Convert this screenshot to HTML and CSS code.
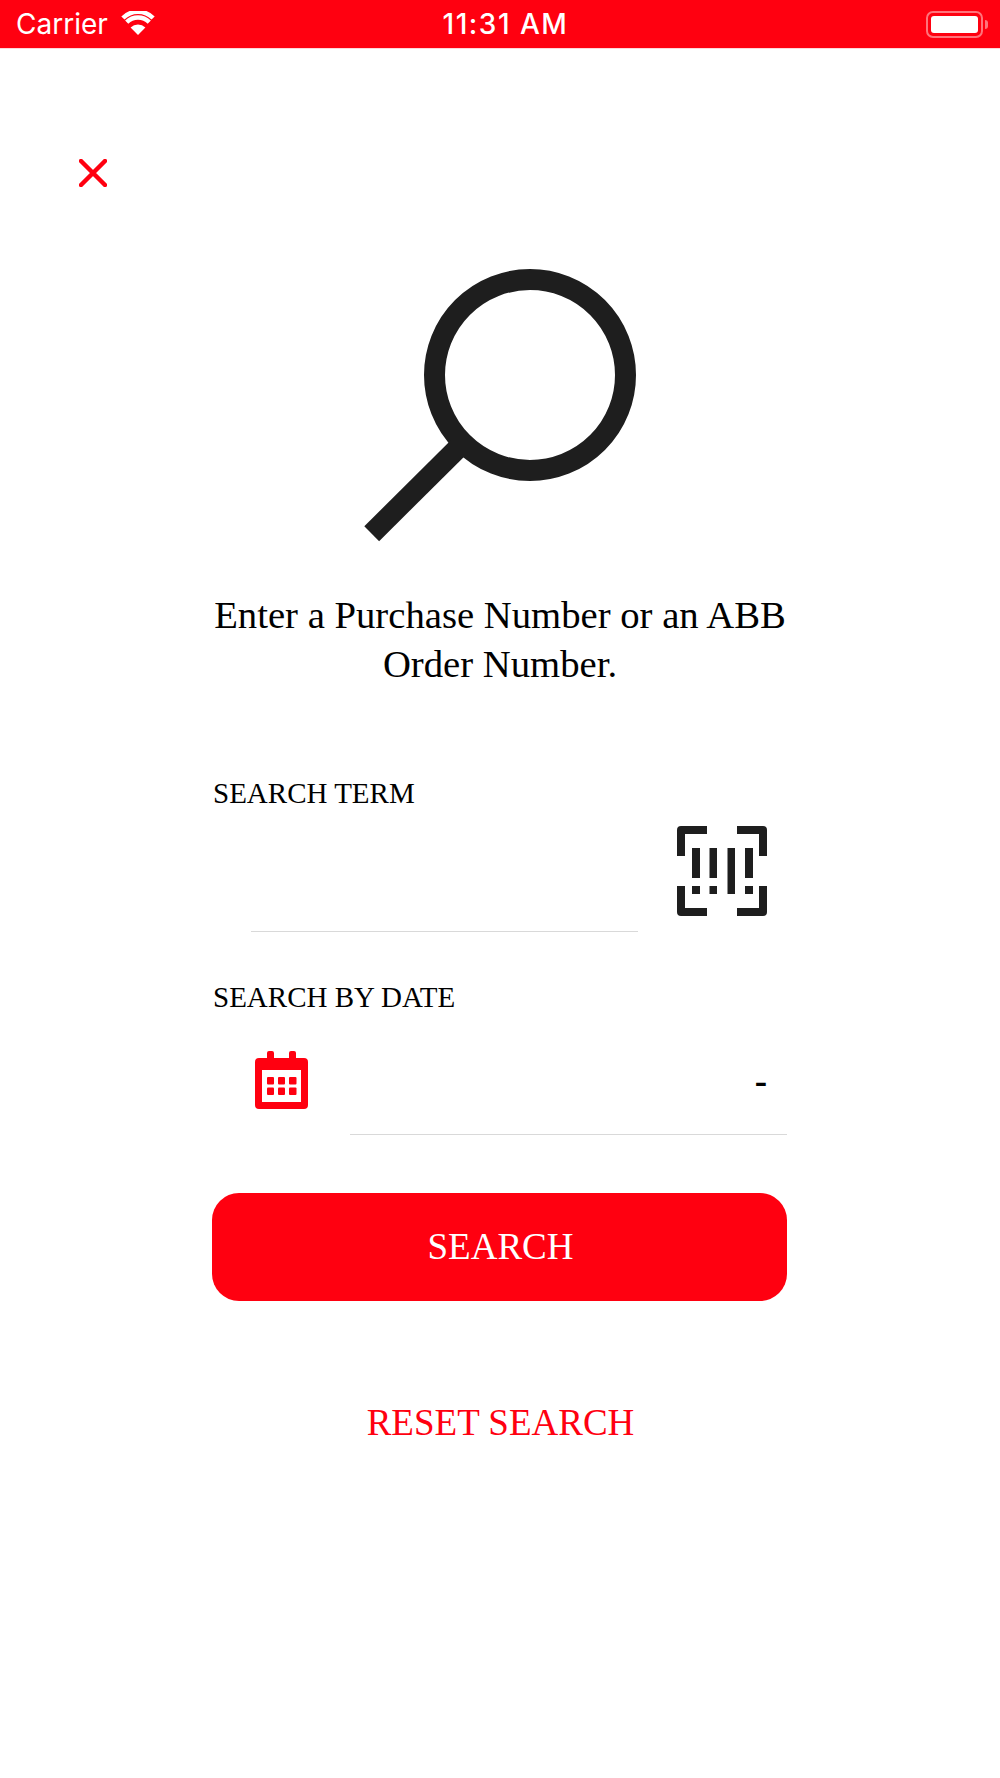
FILE: index.html
```html
<!DOCTYPE html>
<html>
<head>
    <title>Order search</title>
    <meta charset="utf-8">
    <link rel="stylesheet" href="styles.css">
</head>
<body>

<div class="statusbar">
    <div class="carrier">
        <span>Carrier</span>
        <svg class="wifi" width="34" height="24" viewBox="0 0 34 24">
            <path d="M17 24 L9.6 16.6 A10.5 10.5 0 0 1 24.4 16.6 Z" fill="#fff"/>
            <path d="M5.7 11.2 A16 16 0 0 1 28.3 11.2" fill="none" stroke="#fff" stroke-width="4.500"/>
            <path d="M1.9 7 A21.4 21.4 0 0 1 32.1 7" fill="none" stroke="#fff" stroke-width="4.500"/>
        </svg>
    </div>
    <div class="clock">11:31 AM</div>
    <div class="battery">
        <div class="battery-shell"><div class="battery-level"></div></div>
        <div class="battery-nub"></div>
    </div>
</div>

<svg class="close" width="28" height="28" viewBox="0 0 28 28">
    <path d="M2 2 L26 26 M26 2 L2 26" stroke="#ff0010" stroke-width="4.500" stroke-linecap="round"/>
</svg>

<svg class="hero" width="280" height="280" viewBox="0 0 280 280">
    <circle cx="168" cy="111" r="95.5" fill="none" stroke="#1e1e1e" stroke-width="21"/>
    <path d="M96 184 L9.7 269.7" stroke="#1e1e1e" stroke-width="21"/>
</svg>

<p class="intro">Enter a Purchase Number or an ABB<br>Order Number.</p>

<div class="form">
    <div class="label">SEARCH TERM</div>
    <div class="row term-row">
        <input class="field term-field" type="text">
        <svg class="barcode" width="90" height="90" viewBox="0 0 90 90" fill="#1e1e1e">
            <path d="M0 30 V4 Q0 0 4 0 H30 V8 H8 V30 Z"/>
            <path d="M60 0 H86 Q90 0 90 4 V30 H82 V8 H60 Z"/>
            <path d="M0 60 H8 V82 H30 V90 H4 Q0 90 0 86 Z"/>
            <path d="M82 60 H90 V86 Q90 90 86 90 H60 V82 H82 Z"/>
            <rect x="15" y="22" width="8" height="30"/>
            <rect x="15" y="60" width="8" height="8"/>
            <rect x="32.500" y="22" width="7.500" height="30"/>
            <rect x="32.500" y="60" width="7.500" height="8"/>
            <rect x="50.500" y="22" width="7.500" height="46"/>
            <rect x="68" y="22" width="8" height="30"/>
            <rect x="68" y="60" width="8" height="8"/>
        </svg>
    </div>

    <div class="label date-label">SEARCH BY DATE</div>
    <div class="row date-row">
        <svg class="calendar" width="53" height="58" viewBox="0 0 53 58" fill="#ff0010">
            <path fill-rule="evenodd" d="M12 2 Q12 0 14 0 H17 Q19 0 19 2 V7 H34 V2 Q34 0 36 0 H39 Q41 0 41 2 V7 H49 Q53 7 53 11 V54 Q53 58 49 58 H4 Q0 58 0 54 V11 Q0 7 4 7 H12 Z M7 19 V51 H46 V19 Z"/>
            <rect x="12" y="26" width="7" height="7.500" rx="1"/>
            <rect x="23" y="26" width="7" height="7.500" rx="1"/>
            <rect x="34" y="26" width="7.500" height="7.500" rx="1"/>
            <rect x="12" y="36.500" width="7" height="7.500" rx="1"/>
            <rect x="23" y="36.500" width="7" height="7.500" rx="1"/>
            <rect x="34" y="36.500" width="7.500" height="7.500" rx="1"/>
        </svg>
        <div class="field date-field">-</div>
    </div>

    <button class="search-btn">SEARCH</button>
    <button class="reset-btn">RESET SEARCH</button>
</div>

</body>
</html>
```

FILE: styles.css
```css
html, body {
    margin: 0;
    padding: 0;
    background: #fff;
}
body {
    font-family: "Liberation Serif", "Times New Roman", serif;
    color: #000;
}
svg {
    display: block;
}

/* status bar */
.statusbar {
    display: grid;
    grid-template-columns: 1fr auto 1fr;
    align-items: center;
    height: 48px;
    border-bottom: 1px solid #ffd6d9;
    background: #ff0010;
    color: #fff;
    font-family: Inter, "Liberation Sans", sans-serif;
}
.carrier {
    display: flex;
    align-items: center;
    gap: 13px;
    padding-left: 16px;
    font-size: 28px;
}
.wifi {
    margin-top: -2px;
}
.clock {
    padding-left: 11px;
    font-size: 28px;
    font-weight: 500;
    letter-spacing: 1.5px;
}
.battery {
    display: flex;
    align-items: center;
    justify-content: flex-end;
    gap: 2px;
    padding-right: 12px;
}
.battery-shell {
    box-sizing: border-box;
    width: 57px;
    height: 27px;
    padding: 3px;
    border: 2px solid rgba(255, 255, 255, 0.45);
    border-radius: 7px;
}
.battery-level {
    height: 100%;
    border-radius: 3px;
    background: #fff;
}
.battery-nub {
    width: 3px;
    height: 9px;
    border-radius: 0 3px 3px 0;
    background: rgba(255, 255, 255, 0.45);
}

/* top part */
.close {
    margin: 110px 0 0 79px;
}
.hero {
    margin: 77px 0 0 362px;
}
.intro {
    margin: 47px 0 0;
    font-size: 38.7px;
    line-height: 49px;
    text-align: center;
}

/* form */
.form {
    width: 575px;
    margin: 87px 0 0 212px;
}
.label {
    padding-left: 1px;
    font-size: 29px;
    line-height: 34px;
}
.date-label {
    margin-top: 48px;
}
.row {
    display: flex;
}
.field {
    box-sizing: border-box;
    border: 0;
    border-bottom: 1px solid #d9d9d9;
    border-radius: 0;
    outline: 0;
    background: none;
}
.term-row {
    height: 122px;
    padding-left: 39px;
    box-sizing: border-box;
    align-items: flex-end;
}
.term-field {
    width: 387px;
    height: 60px;
    padding: 0;
}
.barcode {
    margin: 0 0 16px 39px;
}
.date-row {
    height: 121px;
    box-sizing: border-box;
    padding-left: 43px;
    align-items: flex-end;
}
.calendar {
    margin-bottom: 26px;
}
.date-field {
    width: 437px;
    margin-left: 42px;
    padding: 0 20px 31px 0;
    font-size: 37px;
    font-weight: bold;
    line-height: 44px;
    text-align: right;
}

.search-btn {
    display: block;
    width: 100%;
    height: 108px;
    margin-top: 58px;
    padding: 0 0 2px 2px;
    border: 0;
    border-radius: 27px;
    background: #ff0010;
    color: #fff;
    font: 37px "Liberation Serif", "Times New Roman", serif;
}
.reset-btn {
    display: block;
    width: 100%;
    height: 42px;
    margin-top: 100px;
    padding: 0 0 0 2px;
    border: 0;
    background: none;
    color: #ff0010;
    font: 37px "Liberation Serif", "Times New Roman", serif;
}
```
